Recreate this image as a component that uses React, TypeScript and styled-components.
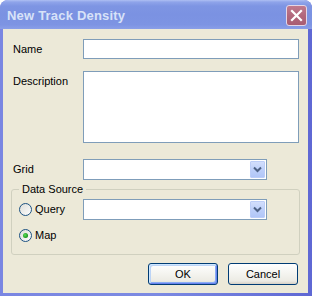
import React from "react";
import styled, { createGlobalStyle } from "styled-components";

const GlobalStyle = createGlobalStyle`
  html, body {
    margin: 0;
    padding: 0;
    background: #ffffff;
  }
  body {
    font-family: "Liberation Sans", Arial, sans-serif;
    font-size: 11px;
    color: #000;
  }
`;

const Window = styled.div`
  width: 312px;
  height: 296px;
  box-sizing: border-box;
  display: flex;
  flex-direction: column;
  background: linear-gradient(to right, #7a86e2 0, #7c8ae2 50%, #5f68d4 100%);
  border-radius: 8px 8px 0 0;
  overflow: hidden;
`;

const TitleBar = styled.div`
  height: 29px;
  flex: none;
  box-sizing: border-box;
  display: flex;
  align-items: center;
  justify-content: space-between;
  padding: 1px 5px 0 7px;
  background: linear-gradient(
    to bottom,
    #aebff3 0,
    #8fa4ea 2px,
    #7e95e3 6px,
    #7b92e2 50%,
    #7d94e3 85%,
    #8a9fe8 100%
  );
`;

const Title = styled.span`
  font-family: "Liberation Sans", Arial, sans-serif;
  font-weight: bold;
  font-size: 13px;
  letter-spacing: 0.2px;
  color: #d8e2f8;
`;

const CloseButton = styled.div`
  width: 21px;
  height: 21px;
  box-sizing: border-box;
  border: 1px solid #e4d6e6;
  border-radius: 3px;
  background: linear-gradient(to bottom, #c07a8e 0, #b2687d 50%, #a85c72 100%);
  display: flex;
  align-items: center;
  justify-content: center;
`;

const Body = styled.div`
  flex: 1;
  margin: 0 4px 3px 3px;
  background: #ece9d8;
  box-sizing: border-box;
  padding: 10px 9px 8px 10px;
  display: flex;
  flex-direction: column;
`;

const Row = styled.div<{ $top?: number; $align?: string }>`
  display: grid;
  grid-template-columns: 70px 1fr;
  align-items: ${p => p.$align || "center"};
  margin-top: ${p => p.$top || 0}px;
`;

const Label = styled.label<{ $pad?: number }>`
  line-height: 13px;
  padding-top: ${p => p.$pad || 0}px;
`;

const TextBox = styled.input`
  box-sizing: border-box;
  width: 216px;
  height: 20px;
  border: 1px solid #7f9db9;
  background: #fff;
  margin: 0;
  padding: 0 3px;
  font: inherit;
  outline: none;
`;

const TextArea = styled.textarea`
  box-sizing: border-box;
  width: 216px;
  height: 72px;
  border: 1px solid #7f9db9;
  background: #fff;
  margin: 0;
  padding: 2px 3px;
  font: inherit;
  resize: none;
  outline: none;
`;

const Combo = styled.div`
  box-sizing: border-box;
  width: 184px;
  height: 21px;
  border: 1px solid #7f9db9;
  background: #fff;
  padding: 1px;
  display: flex;
  justify-content: flex-end;
`;

const ArrowButton = styled.div`
  width: 15px;
  height: 17px;
  box-sizing: border-box;
  border: 1px solid #bccdf8;
  border-radius: 1px;
  background: linear-gradient(to bottom, #d2defc 0, #bed0fa 50%, #b1c6f7 100%);
  display: flex;
  align-items: center;
  justify-content: center;
`;

const GroupBox = styled.fieldset`
  margin: 3px -1px 0 -2px;
  padding: 3px 9px 11px 7px;
  border: 1px solid #d0d0bf;
  border-radius: 3px;
  min-width: 0;
`;

const Legend = styled.legend`
  padding: 0 3px;
  line-height: 13px;
  margin-left: 0;
`;

const GroupRow = styled.div<{ $top?: number; $h: number }>`
  display: grid;
  grid-template-columns: 64px 1fr;
  align-items: center;
  height: ${p => p.$h}px;
  margin-top: ${p => p.$top || 0}px;
`;

const RadioLabel = styled.label`
  display: flex;
  align-items: center;
  gap: 3px;
  line-height: 13px;
`;

const Buttons = styled.div`
  display: flex;
  justify-content: flex-end;
  gap: 10px;
  margin: 8px 1px 0 0;
`;

const Button = styled.button<{ $default?: boolean }>`
  width: 70px;
  height: 22px;
  box-sizing: border-box;
  margin: 0;
  padding: 0;
  font: inherit;
  color: #000;
  border: 1px solid #003c74;
  border-radius: 3px;
  background: linear-gradient(to bottom, #ffffff 0, #f6f6f2 40%, #ecebe4 85%, #d6d0c5 100%);
  box-shadow: ${p =>
    p.$default
      ? "inset 1px 1px 0 #cee7ff, inset -1px -1px 0 #6982ee, inset 2px 2px 0 #bcd4f6, inset -2px -2px 0 #89adf4"
      : "none"};
`;

const Chevron = () => (
  <svg width="9" height="7" viewBox="0 0 9 7">
    <path d="M1 1.5 L4.5 5 L8 1.5" fill="none" stroke="#4d6185" strokeWidth="2" />
  </svg>
);

const Radio = ({ checked }: { checked?: boolean }) => (
  <svg width="13" height="13" viewBox="0 0 13 13">
    <defs>
      <linearGradient id="rf" x1="0" y1="0" x2="1" y2="1">
        <stop offset="0" stopColor="#dcdcd7" />
        <stop offset="1" stopColor="#ffffff" />
      </linearGradient>
      <radialGradient id="rd" cx="0.4" cy="0.4" r="0.6">
        <stop offset="0" stopColor="#5be05b" />
        <stop offset="1" stopColor="#1a931a" />
      </radialGradient>
    </defs>
    <circle cx="6.5" cy="6.5" r="6" fill="url(#rf)" stroke="#1c5180" strokeWidth="1" />
    {checked && <circle cx="6.5" cy="6.5" r="2.5" fill="url(#rd)" />}
  </svg>
);

const Close = () => (
  <svg width="13" height="13" viewBox="0 0 13 13">
    <path d="M2 2 L11 11 M11 2 L2 11" stroke="#ffffff" strokeWidth="2.2" strokeLinecap="square" />
  </svg>
);

const App = () => (
  <>
    <GlobalStyle />
    <Window>
      <TitleBar>
        <Title>New Track Density</Title>
        <CloseButton>
          <Close />
        </CloseButton>
      </TitleBar>
      <Body>
        <Row>
          <Label>Name</Label>
          <TextBox />
        </Row>
        <Row $top={12} $align="start">
          <Label $pad={4}>Description</Label>
          <TextArea />
        </Row>
        <Row $top={16}>
          <Label>Grid</Label>
          <Combo>
            <ArrowButton>
              <Chevron />
            </ArrowButton>
          </Combo>
        </Row>
        <GroupBox>
          <Legend>Data Source</Legend>
          <GroupRow $h={21}>
            <RadioLabel>
              <Radio />
              Query
            </RadioLabel>
            <Combo>
              <ArrowButton>
                <Chevron />
              </ArrowButton>
            </Combo>
          </GroupRow>
          <GroupRow $top={7} $h={16}>
            <RadioLabel>
              <Radio checked />
              Map
            </RadioLabel>
          </GroupRow>
        </GroupBox>
        <Buttons>
          <Button $default>OK</Button>
          <Button>Cancel</Button>
        </Buttons>
      </Body>
    </Window>
  </>
);

export default App;
